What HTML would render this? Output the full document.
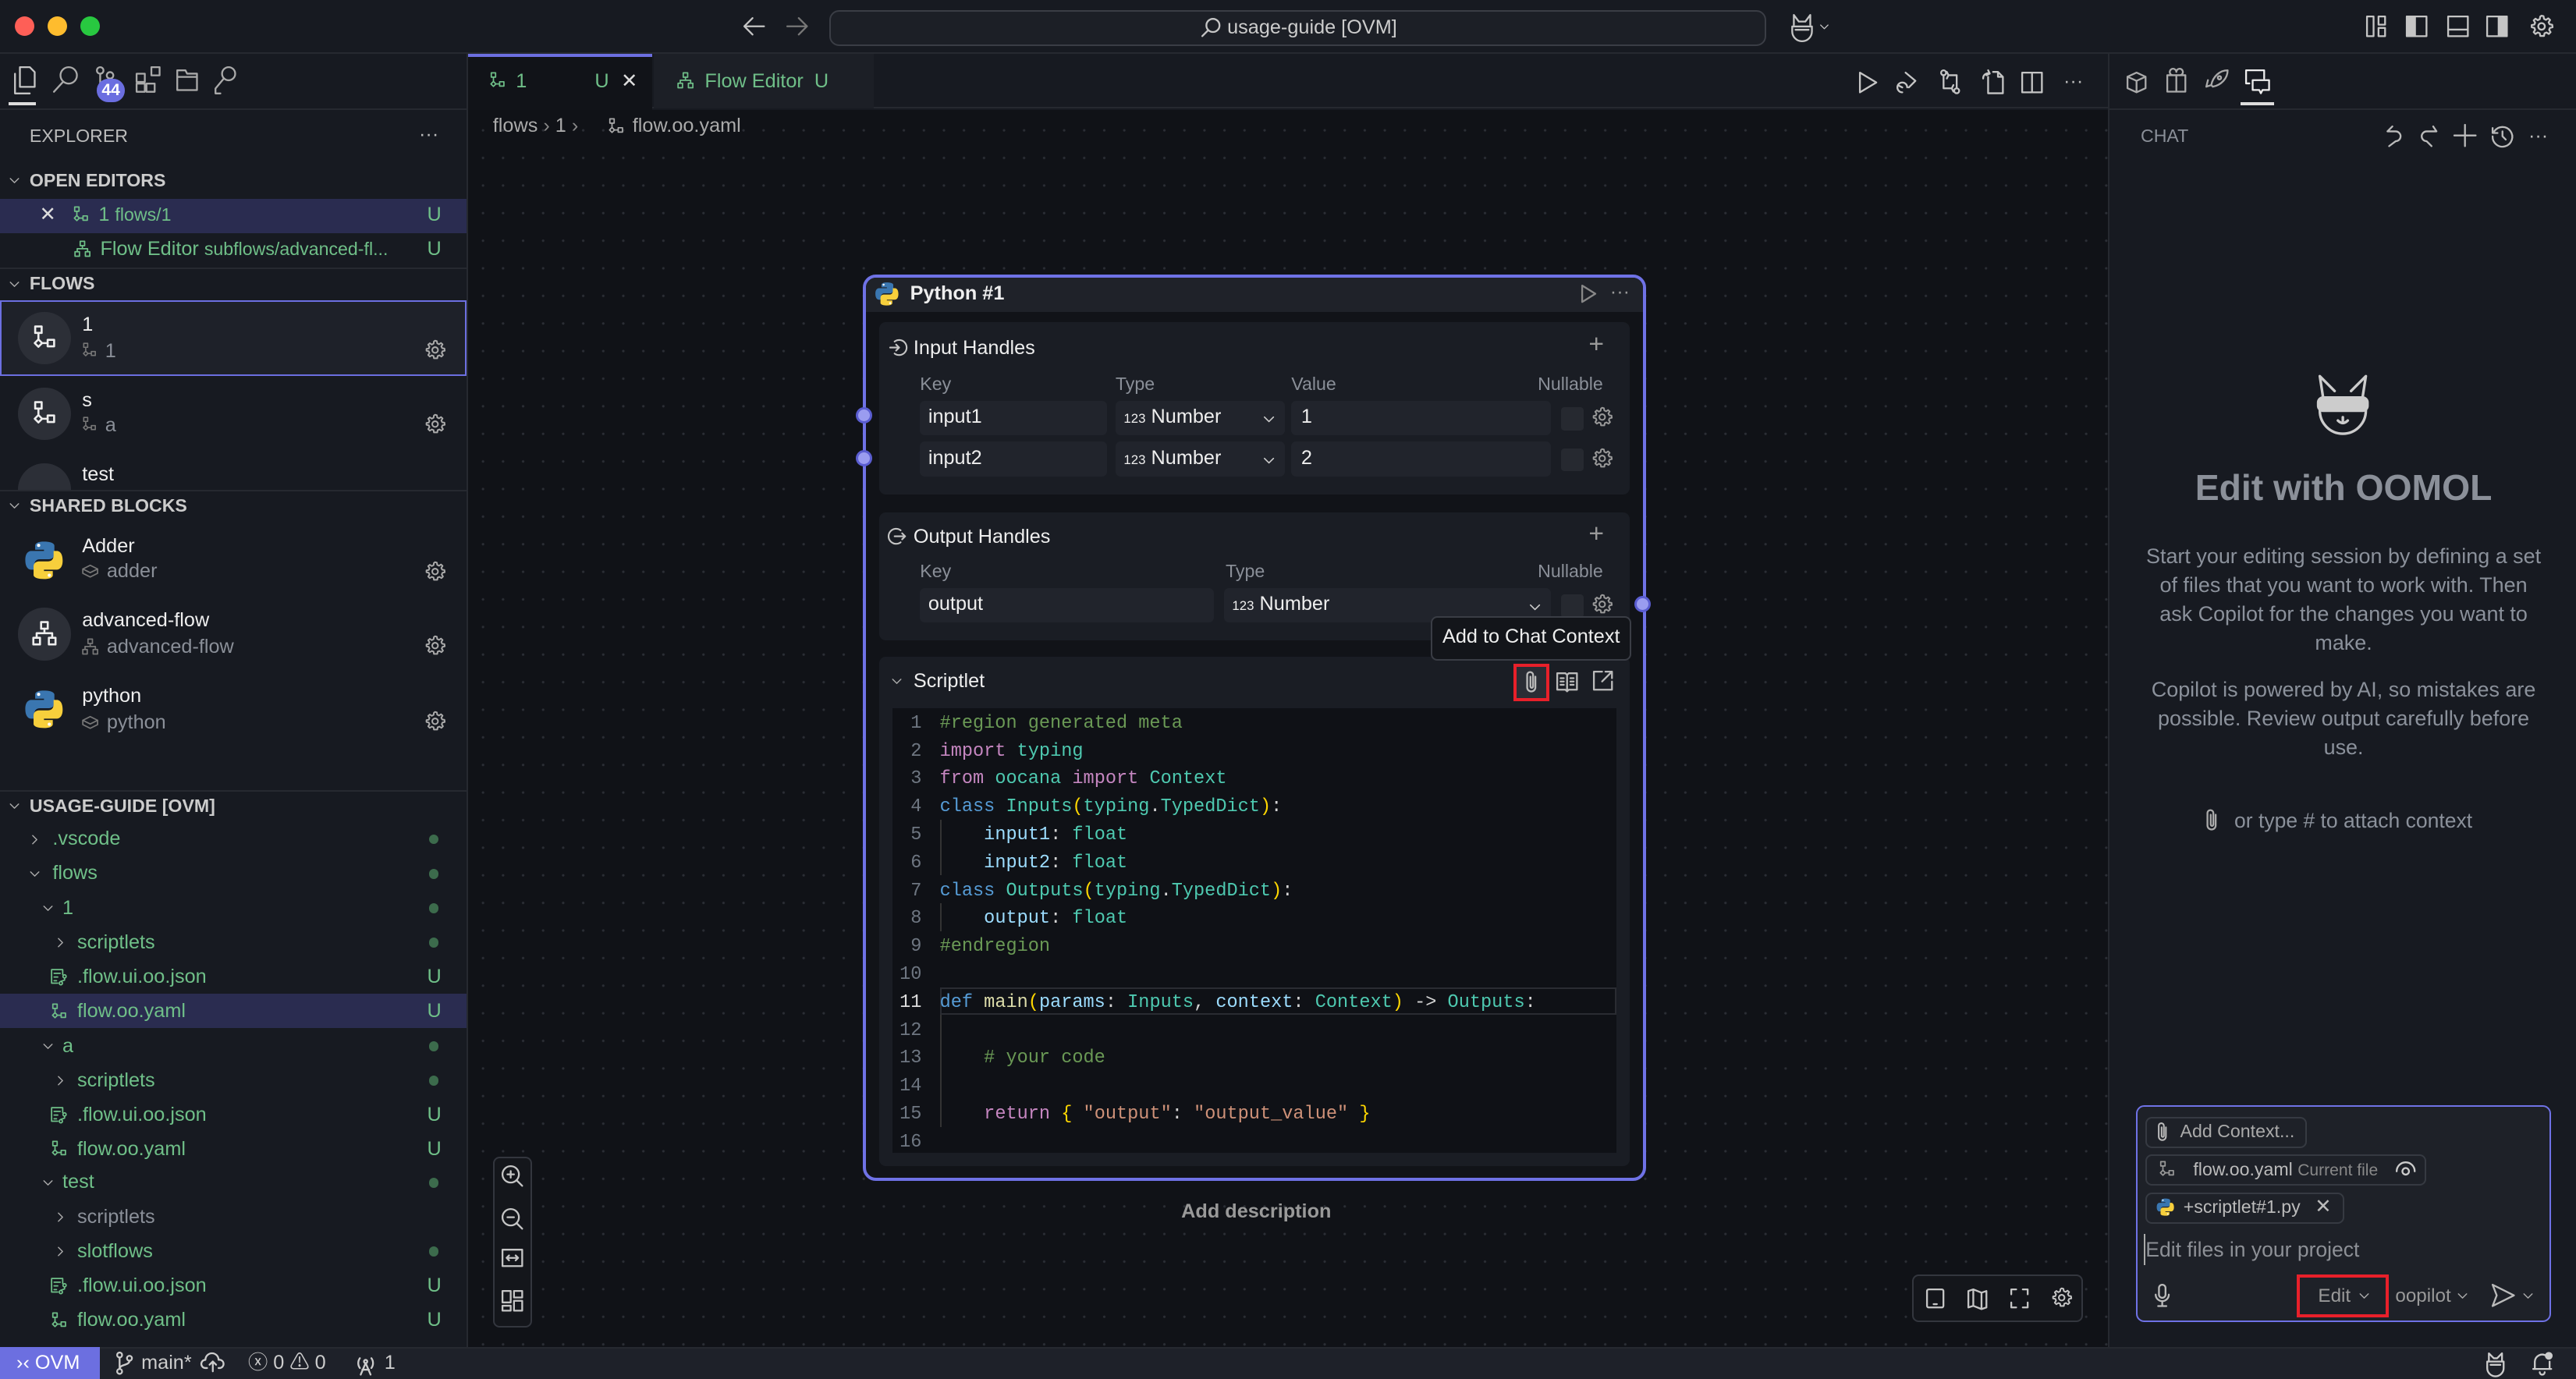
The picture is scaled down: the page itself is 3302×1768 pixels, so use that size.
<!DOCTYPE html>
<html><head><meta charset="utf-8">
<style>
*{box-sizing:border-box;margin:0;padding:0}
html,body{width:3302px;height:1768px;overflow:hidden;background:#16181e}
#r{zoom:2.1059;width:1568px;height:840px;position:relative;font-family:"Liberation Sans",sans-serif;font-size:12px;color:#cccccc;background:#171a21;overflow:hidden}
.a{position:absolute;white-space:nowrap;line-height:16px}
.g{color:#6fbf88}
.m{color:#8a8f98}
.b{font-weight:bold}
svg.i{position:absolute;overflow:visible;fill:none;stroke:#c5c5c5;stroke-width:1.1;stroke-linecap:round;stroke-linejoin:round}
.bx{position:absolute}
.mono{font-family:"Liberation Mono",monospace;font-size:11.2px;line-height:17px;white-space:pre}
</style></head><body><div id="r">
<svg width="0" height="0" style="position:absolute">
<defs>
<symbol id="gear" viewBox="0 0 16 16"><path d="M8 1.5l1.2.3.3 1.6 1.2.6 1.4-.9 1.1 1 -.9 1.4.6 1.2 1.6.3.2 1.5-1.6.4-.5 1.2.9 1.4-1.1 1.1-1.4-.9-1.2.5-.3 1.6H7.2l-.3-1.6-1.2-.5-1.4.9-1.1-1.1.9-1.4-.5-1.2-1.6-.4V7.2l1.6-.3.5-1.2-.9-1.4 1.1-1 1.4.9 1.2-.6.3-1.6z" fill="none"/><circle cx="8" cy="8" r="2"/></symbol>
<symbol id="flow" viewBox="0 0 16 16"><rect x="3" y="1.5" width="3.5" height="3.5"/><path d="M4.75 5v3.5"/><path d="M4.75 8.5l2 2-2 2-2-2z"/><path d="M6.75 10.5h3"/><rect x="9.75" y="8.75" width="3.5" height="3.5"/></symbol>
<symbol id="tree" viewBox="0 0 16 16"><rect x="6.2" y="1.5" width="3.6" height="3.6"/><path d="M8 5.1v2.4M3.8 10V7.5h8.4V10"/><rect x="2" y="10" width="3.6" height="3.6"/><rect x="10.4" y="10" width="3.6" height="3.6"/></symbol>
<symbol id="py" viewBox="0 0 16 16"><path d="M7.9 1C4.5 1 4.7 2.5 4.7 2.5V4h3.3v.5H3.4S1 4.2 1 7.9s2.1 3.6 2.1 3.6h1.3V9.7s-.1-2.1 2.1-2.1h3.4s2 0 2-2V2.6S12.2 1 7.9 1z" fill="#3a76b0" stroke="none"/><circle cx="6" cy="2.4" r=".6" fill="#fff" stroke="none"/><path d="M8.1 15c3.4 0 3.2-1.5 3.2-1.5V12H8v-.5h4.6S15 11.8 15 8.1s-2.1-3.6-2.1-3.6h-1.3v1.8s.1 2.1-2.1 2.1H6.1s-2 0-2 2v3S3.8 15 8.1 15z" fill="#f7cf3c" stroke="none"/><circle cx="10" cy="13.6" r=".6" fill="#fff" stroke="none"/></symbol>
<symbol id="cube" viewBox="0 0 16 16"><path d="M8 3l6 3-6 3-6-3z"/><path d="M2 6v3.5l6 3 6-3V6"/></symbol>
<symbol id="clip" viewBox="0 0 16 16"><path d="M10.5 5v6.5a2.5 2.5 0 0 1-5 0V4a1.8 1.8 0 0 1 3.6 0v7a.8.8 0 0 1-1.6 0V5"/></symbol>
<symbol id="chev" viewBox="0 0 16 16"><path d="M4 6l4 4 4-4"/></symbol>
<symbol id="chevr" viewBox="0 0 16 16"><path d="M6 4l4 4-4 4"/></symbol>
<symbol id="json" viewBox="0 0 16 16"><path d="M2 2h9v4M2 2v11h5M4 5h5M4 8h3M4 11h2"/><circle cx="12.5" cy="7.5" r="1.3"/><circle cx="9.5" cy="13" r="1.3"/><path d="M12.5 9v1.5l-3 1"/></symbol>
</defs></svg>

<!-- titlebar -->
<div class="bx" style="left:0;top:0;width:1568px;height:33px;background:#171a21;border-bottom:1px solid #262930"></div>
<div class="bx" style="left:9px;top:10px;width:12px;height:12px;border-radius:50%;background:#fe5f57"></div>
<div class="bx" style="left:29px;top:10px;width:12px;height:12px;border-radius:50%;background:#febc2e"></div>
<div class="bx" style="left:49px;top:10px;width:12px;height:12px;border-radius:50%;background:#28c840"></div>
<svg class="i" style="left:452px;top:9px" width="14" height="14" viewBox="0 0 14 14"><path d="M13 7H1M6 2L1 7l5 5"/></svg>
<svg class="i" style="left:478px;top:9px;stroke:#777" width="14" height="14" viewBox="0 0 14 14"><path d="M1 7h12M8 2l5 5-5 5"/></svg>
<div class="bx" style="left:505px;top:6px;width:570px;height:22px;border:1px solid #3a3d45;border-radius:6px;background:#1c1f26"></div>
<svg class="i" style="left:731px;top:10px" width="13" height="13" viewBox="0 0 13 13"><circle cx="7.5" cy="5.5" r="4"/><path d="M4.5 8.5L1 12"/></svg>
<div class="a" style="left:747px;top:9px;color:#ccc">usage-guide [OVM]</div>
<svg class="i" style="left:1088px;top:7px" width="18" height="18" viewBox="0 0 18 18"><path d="M4 8V2l3 4h4l3-4v6M3 9h12v3a5 5 0 0 1-12 0z M5 11h8"/></svg>
<svg class="i" style="left:1106px;top:12px" width="9" height="9"><use href="#chev"/></svg>
<svg class="i" style="left:1440px;top:9px" width="14" height="14" viewBox="0 0 14 14"><rect x="1" y="1" width="4" height="12"/><rect x="8" y="1" width="4" height="5"/><rect x="8" y="8" width="4" height="5"/></svg>
<svg class="i" style="left:1464px;top:9px" width="14" height="14" viewBox="0 0 14 14"><rect x="1" y="1" width="12" height="12"/><rect x="1" y="1" width="5" height="12" fill="#c5c5c5"/></svg>
<svg class="i" style="left:1489px;top:9px" width="14" height="14" viewBox="0 0 14 14"><rect x="1" y="1" width="12" height="12"/><path d="M1 9h12"/></svg>
<svg class="i" style="left:1513px;top:9px" width="14" height="14" viewBox="0 0 14 14"><rect x="1" y="1" width="12" height="12"/><rect x="8" y="1" width="5" height="12" fill="#c5c5c5"/></svg>
<svg class="i" style="left:1539px;top:8px" width="16" height="16"><use href="#gear"/></svg>

<!-- sidebar -->
<div class="bx" style="left:0;top:33px;width:285px;height:787px;background:#171a21;border-right:1px solid #262930"></div>
<div class="bx" style="left:0;top:66px;width:284px;height:1px;background:#262930"></div>
<svg class="i" style="left:7px;top:40px" width="16" height="18" viewBox="0 0 16 18"><path d="M5 1h6l3 3v9H5zM2 5v12h9"/></svg>
<div class="bx" style="left:5px;top:62px;width:17px;height:2px;background:#ddd"></div>
<svg class="i" style="left:32px;top:40px;stroke:#aaa" width="16" height="18" viewBox="0 0 16 18"><circle cx="10" cy="6" r="5"/><path d="M6.5 10L1 16"/></svg>
<svg class="i" style="left:57px;top:40px;stroke:#aaa" width="14" height="18" viewBox="0 0 14 18"><circle cx="4" cy="3" r="2"/><path d="M4 5v9"/><circle cx="10" cy="6" r="2"/></svg>
<div class="bx" style="left:59px;top:48px;width:17px;height:14px;border-radius:7px;background:#6b6ee0;color:#fff;font-size:10px;line-height:14px;text-align:center;font-weight:bold">44</div>
<svg class="i" style="left:82px;top:40px;stroke:#aaa" width="18" height="18" viewBox="0 0 18 18"><rect x="1" y="5" width="5" height="5"/><rect x="1" y="11" width="5" height="5"/><rect x="7" y="11" width="5" height="5"/><rect x="10" y="1" width="5" height="5"/></svg>
<svg class="i" style="left:106px;top:41px;stroke:#aaa" width="16" height="16" viewBox="0 0 16 16"><path d="M2 2h5l1 2h6v10H2zM2 6h12"/></svg>
<svg class="i" style="left:129px;top:40px;stroke:#aaa" width="16" height="18" viewBox="0 0 16 18"><circle cx="10" cy="5" r="4"/><path d="M7 8L2 14v3h3"/></svg>

<div class="a m" style="left:18px;top:75px;font-size:11px;color:#bbb">EXPLORER</div>
<div class="a" style="left:255px;top:74px;color:#bbb">···</div>
<svg class="i" style="left:4px;top:105px;stroke:#aaa" width="10" height="10"><use href="#chev"/></svg>
<div class="a b" style="left:18px;top:102px;font-size:11px;color:#ccc">OPEN EDITORS</div>
<div class="bx" style="left:0;top:121px;width:284px;height:21px;background:#2a2c50"></div>
<div class="a" style="left:24px;top:123px;color:#ddd">✕</div>
<svg class="i" style="left:43px;top:125px;stroke:#6fbf88" width="12" height="12"><use href="#flow"/></svg>
<div class="a g" style="left:60px;top:123px">1 <span style="font-size:11px">flows/1</span></div>
<div class="a g" style="left:260px;top:123px">U</div>
<svg class="i" style="left:44px;top:146px;stroke:#6fbf88" width="12" height="12"><use href="#tree"/></svg>
<div class="a g" style="left:61px;top:144px">Flow Editor <span style="font-size:11px">subflows/advanced-fl...</span></div>
<div class="a g" style="left:260px;top:144px">U</div>
<div class="bx" style="left:0;top:163px;width:284px;height:1px;background:#262930"></div>
<svg class="i" style="left:4px;top:168px;stroke:#aaa" width="10" height="10"><use href="#chev"/></svg>
<div class="a b" style="left:18px;top:165px;font-size:11px">FLOWS</div>
<div class="bx" style="left:0;top:183px;width:284px;height:46px;background:#1e2129;border:1px solid #6c6fe0"></div>
<div class="bx" style="left:11px;top:190px;width:32px;height:32px;border-radius:50%;background:#2c2f37"></div>
<svg class="i" style="left:18px;top:197px;stroke:#eee" width="18" height="18"><use href="#flow"/></svg>
<div class="a" style="left:50px;top:190px;color:#eee">1</div>
<svg class="i" style="left:49px;top:208px;stroke:#777" width="11" height="11"><use href="#flow"/></svg>
<div class="a m" style="left:64px;top:206px">1</div>
<svg class="i" style="left:258px;top:206px;stroke:#aaa" width="14" height="14"><use href="#gear"/></svg>
<div class="bx" style="left:11px;top:236px;width:32px;height:32px;border-radius:50%;background:#2c2f37"></div>
<svg class="i" style="left:18px;top:243px;stroke:#eee" width="18" height="18"><use href="#flow"/></svg>
<div class="a" style="left:50px;top:236px;color:#eee">s</div>
<svg class="i" style="left:49px;top:253px;stroke:#777" width="11" height="11"><use href="#flow"/></svg>
<div class="a m" style="left:64px;top:251px">a</div>
<svg class="i" style="left:258px;top:251px;stroke:#aaa" width="14" height="14"><use href="#gear"/></svg>
<div class="bx" style="left:11px;top:282px;width:32px;height:16px;border-radius:16px 16px 0 0;background:#2c2f37"></div>
<div class="a" style="left:50px;top:281px;color:#eee">test</div>
<div class="bx" style="left:0;top:298px;width:284px;height:1px;background:#262930"></div>
<svg class="i" style="left:4px;top:303px;stroke:#aaa" width="10" height="10"><use href="#chev"/></svg>
<div class="a b" style="left:18px;top:300px;font-size:11px">SHARED BLOCKS</div>
<svg class="i" style="left:14px;top:328px" width="26" height="26"><use href="#py"/></svg>
<div class="a" style="left:50px;top:325px;color:#eee">Adder</div>
<svg class="i" style="left:49px;top:342px;stroke:#777" width="12" height="12"><use href="#cube"/></svg>
<div class="a m" style="left:65px;top:340px">adder</div>
<svg class="i" style="left:258px;top:341px;stroke:#aaa" width="14" height="14"><use href="#gear"/></svg>
<div class="bx" style="left:11px;top:370px;width:32px;height:32px;border-radius:50%;background:#2c2f37"></div>
<svg class="i" style="left:18px;top:377px;stroke:#eee" width="18" height="18"><use href="#tree"/></svg>
<div class="a" style="left:50px;top:370px;color:#eee">advanced-flow</div>
<svg class="i" style="left:49px;top:388px;stroke:#777" width="12" height="12"><use href="#tree"/></svg>
<div class="a m" style="left:65px;top:386px">advanced-flow</div>
<svg class="i" style="left:258px;top:386px;stroke:#aaa" width="14" height="14"><use href="#gear"/></svg>
<svg class="i" style="left:14px;top:419px" width="26" height="26"><use href="#py"/></svg>
<div class="a" style="left:50px;top:416px;color:#eee">python</div>
<svg class="i" style="left:49px;top:434px;stroke:#777" width="12" height="12"><use href="#cube"/></svg>
<div class="a m" style="left:65px;top:432px">python</div>
<svg class="i" style="left:258px;top:432px;stroke:#aaa" width="14" height="14"><use href="#gear"/></svg>
<div class="bx" style="left:0;top:481px;width:284px;height:1px;background:#262930"></div>
<svg class="i" style="left:4px;top:486px;stroke:#aaa" width="10" height="10"><use href="#chev"/></svg>
<div class="a b" style="left:18px;top:483px;font-size:11px">USAGE-GUIDE [OVM]</div>

<div class="bx" style="left:0;top:605px;width:284px;height:21px;background:#2a2c50"></div>
<!-- tree -->
<svg class="i" style="left:16px;top:506px;stroke:#aaa" width="10" height="10"><use href="#chevr"/></svg><div class="a g" style="left:32px;top:503px">.vscode</div>
<svg class="i" style="left:16px;top:527px;stroke:#aaa" width="10" height="10"><use href="#chev"/></svg><div class="a g" style="left:32px;top:524px">flows</div>
<svg class="i" style="left:24px;top:548px;stroke:#aaa" width="10" height="10"><use href="#chev"/></svg><div class="a g" style="left:38px;top:545px">1</div>
<svg class="i" style="left:32px;top:569px;stroke:#aaa" width="10" height="10"><use href="#chevr"/></svg><div class="a g" style="left:47px;top:566px">scriptlets</div>
<svg class="i" style="left:30px;top:589px;stroke:#6fbf88" width="12" height="12"><use href="#json"/></svg><div class="a g" style="left:47px;top:587px">.flow.ui.oo.json</div>
<svg class="i" style="left:30px;top:610px;stroke:#6fbf88" width="12" height="12"><use href="#flow"/></svg><div class="a g" style="left:47px;top:608px">flow.oo.yaml</div>
<svg class="i" style="left:24px;top:632px;stroke:#aaa" width="10" height="10"><use href="#chev"/></svg><div class="a g" style="left:38px;top:629px">a</div>
<svg class="i" style="left:32px;top:653px;stroke:#aaa" width="10" height="10"><use href="#chevr"/></svg><div class="a g" style="left:47px;top:650px">scriptlets</div>
<svg class="i" style="left:30px;top:673px;stroke:#6fbf88" width="12" height="12"><use href="#json"/></svg><div class="a g" style="left:47px;top:671px">.flow.ui.oo.json</div>
<svg class="i" style="left:30px;top:694px;stroke:#6fbf88" width="12" height="12"><use href="#flow"/></svg><div class="a g" style="left:47px;top:692px">flow.oo.yaml</div>
<svg class="i" style="left:24px;top:715px;stroke:#aaa" width="10" height="10"><use href="#chev"/></svg><div class="a g" style="left:38px;top:712px">test</div>
<svg class="i" style="left:32px;top:736px;stroke:#aaa" width="10" height="10"><use href="#chevr"/></svg><div class="a m" style="left:47px;top:733px">scriptlets</div>
<svg class="i" style="left:32px;top:757px;stroke:#aaa" width="10" height="10"><use href="#chevr"/></svg><div class="a g" style="left:47px;top:754px">slotflows</div>
<svg class="i" style="left:30px;top:777px;stroke:#6fbf88" width="12" height="12"><use href="#json"/></svg><div class="a g" style="left:47px;top:775px">.flow.ui.oo.json</div>
<svg class="i" style="left:30px;top:798px;stroke:#6fbf88" width="12" height="12"><use href="#flow"/></svg><div class="a g" style="left:47px;top:796px">flow.oo.yaml</div>
<!-- status markers -->
<div class="bx" style="left:261px;top:508px;width:6px;height:6px;border-radius:50%;background:#3c6b4c"></div>
<div class="bx" style="left:261px;top:529px;width:6px;height:6px;border-radius:50%;background:#3c6b4c"></div>
<div class="bx" style="left:261px;top:550px;width:6px;height:6px;border-radius:50%;background:#3c6b4c"></div>
<div class="bx" style="left:261px;top:571px;width:6px;height:6px;border-radius:50%;background:#3c6b4c"></div>
<div class="a g" style="left:260px;top:587px">U</div>
<div class="a g" style="left:260px;top:608px">U</div>
<div class="bx" style="left:261px;top:634px;width:6px;height:6px;border-radius:50%;background:#3c6b4c"></div>
<div class="bx" style="left:261px;top:655px;width:6px;height:6px;border-radius:50%;background:#3c6b4c"></div>
<div class="a g" style="left:260px;top:671px">U</div>
<div class="a g" style="left:260px;top:692px">U</div>
<div class="bx" style="left:261px;top:717px;width:6px;height:6px;border-radius:50%;background:#3c6b4c"></div>
<div class="bx" style="left:261px;top:759px;width:6px;height:6px;border-radius:50%;background:#3c6b4c"></div>
<div class="a g" style="left:260px;top:775px">U</div>
<div class="a g" style="left:260px;top:796px">U</div>

<!-- editor -->
<div class="bx" style="left:285px;top:33px;width:999px;height:33px;background:#171a21;border-bottom:1px solid #262930"></div>
<div class="bx" style="left:285px;top:33px;width:112px;height:34px;background:#111318;border-top:2px solid #6c6fe0"></div>
<svg class="i" style="left:297px;top:43px;stroke:#6fbf88" width="12" height="12"><use href="#flow"/></svg>
<div class="a g" style="left:314px;top:42px">1</div>
<div class="a g" style="left:362px;top:42px">U</div>
<div class="a" style="left:378px;top:42px;color:#ddd">✕</div>
<div class="bx" style="left:398px;top:33px;width:134px;height:33px;background:#1c1f26"></div>
<svg class="i" style="left:411px;top:43px;stroke:#6fbf88" width="12" height="12"><use href="#tree"/></svg>
<div class="a g" style="left:429px;top:42px">Flow Editor&nbsp; U</div>
<svg class="i" style="left:1131px;top:43px" width="12" height="14" viewBox="0 0 12 14"><path d="M1 1l10 6-10 6z"/></svg>
<svg class="i" style="left:1154px;top:43px" width="14" height="14" viewBox="0 0 14 14"><path d="M6 1l6 5-4 4M4 13a3 3 0 1 1 3-3M2 9l2 1"/></svg>
<svg class="i" style="left:1180px;top:42px" width="14" height="16" viewBox="0 0 14 16"><circle cx="3" cy="2.5" r="1.5"/><circle cx="11" cy="13.5" r="1.5"/><path d="M3 4v8h5M9 10l-1 2 1 2M11 12V4H6M5 2l1 2-1 2"/></svg>
<svg class="i" style="left:1206px;top:42px" width="14" height="16" viewBox="0 0 14 16"><path d="M4 5V15h9V5l-3-3H7M10 2v3h3M1 6a3 3 0 0 1 4-3M4 1l1 2-2 1"/></svg>
<svg class="i" style="left:1230px;top:43px" width="14" height="14" viewBox="0 0 14 14"><rect x="1" y="1" width="12" height="12"/><path d="M7 1v12"/></svg>
<div class="a" style="left:1256px;top:42px;color:#bbb">···</div>

<div class="bx" style="left:285px;top:67px;width:999px;height:753px;background-color:#101217;background-image:radial-gradient(circle,#2b2e35 0.6px,transparent 0.9px);background-size:12.2px 16.8px;background-position:3px 4px"></div>
<div class="a" style="left:300px;top:69px;color:#aaa">flows <span style="color:#888">›</span> 1 <span style="color:#888">›</span></div>
<svg class="i" style="left:369px;top:71px;stroke:#aaa" width="12" height="12"><use href="#flow"/></svg>
<div class="a" style="left:385px;top:69px;color:#aaa">flow.oo.yaml</div>
<div class="bx" style="left:1283px;top:33px;width:1px;height:787px;background:#262930"></div>

<!-- node -->
<div class="bx" style="left:525px;top:167px;width:477px;height:552px;border:2px solid #6f72e6;border-radius:8px;background:#111318"></div>
<div class="bx" style="left:527px;top:169px;width:473px;height:21px;background:#1f2229;border-radius:6px 6px 0 0"></div>
<svg class="i" style="left:532px;top:171px" width="16" height="16"><use href="#py"/></svg>
<div class="a b" style="left:554px;top:171px;color:#eee">Python #1</div>
<svg class="i" style="left:962px;top:173px;stroke:#888" width="10" height="12" viewBox="0 0 10 12"><path d="M1 1l8 5-8 5z"/></svg>
<div class="a" style="left:980px;top:170px;color:#999">···</div>

<div class="bx" style="left:535px;top:196px;width:457px;height:105px;background:#1a1d24;border-radius:4px"></div>
<svg class="i" style="left:541px;top:206px" width="11" height="11" viewBox="0 0 12 12"><path d="M4 2a5 5 0 1 1 0 8M1 6h6M5 4l2 2-2 2"/></svg>
<div class="a" style="left:556px;top:204px;color:#eee">Input Handles</div>
<div class="a" style="left:967px;top:202px;color:#999;font-size:16px">+</div>
<div class="a m" style="left:560px;top:226px;font-size:11px">Key</div>
<div class="a m" style="left:679px;top:226px;font-size:11px">Type</div>
<div class="a m" style="left:786px;top:226px;font-size:11px">Value</div>
<div class="a m" style="left:936px;top:226px;font-size:11px">Nullable</div>
<div class="bx" style="left:560px;top:244px;width:114px;height:21px;background:#21242c;border-radius:3px"></div>
<div class="bx" style="left:679px;top:244px;width:103px;height:21px;background:#21242c;border-radius:3px"></div>
<div class="bx" style="left:786px;top:244px;width:158px;height:21px;background:#21242c;border-radius:3px"></div>
<div class="bx" style="left:950px;top:248px;width:14px;height:14px;background:#262930;border-radius:2px"></div>
<div class="bx" style="left:560px;top:269px;width:114px;height:21px;background:#21242c;border-radius:3px"></div>
<div class="bx" style="left:679px;top:269px;width:103px;height:21px;background:#21242c;border-radius:3px"></div>
<div class="bx" style="left:786px;top:269px;width:158px;height:21px;background:#21242c;border-radius:3px"></div>
<div class="bx" style="left:950px;top:273px;width:14px;height:14px;background:#262930;border-radius:2px"></div>
<div class="a" style="left:565px;top:246px;color:#eee">input1</div>
<div class="a" style="left:684px;top:246px;color:#eee"><span style="font-size:8px">123</span> Number</div>
<svg class="i" style="left:767px;top:250px;stroke:#ccc" width="11" height="11"><use href="#chev"/></svg>
<div class="a" style="left:792px;top:246px;color:#eee">1</div>
<svg class="i" style="left:968px;top:247px;stroke:#999" width="14" height="14"><use href="#gear"/></svg>
<div class="a" style="left:565px;top:271px;color:#eee">input2</div>
<div class="a" style="left:684px;top:271px;color:#eee"><span style="font-size:8px">123</span> Number</div>
<svg class="i" style="left:767px;top:275px;stroke:#ccc" width="11" height="11"><use href="#chev"/></svg>
<div class="a" style="left:792px;top:271px;color:#eee">2</div>
<svg class="i" style="left:968px;top:272px;stroke:#999" width="14" height="14"><use href="#gear"/></svg>

<div class="bx" style="left:535px;top:312px;width:457px;height:78px;background:#1a1d24;border-radius:4px"></div>
<svg class="i" style="left:541px;top:321px" width="11" height="11" viewBox="0 0 12 12"><path d="M8 2a5 5 0 1 0 0 8M4 6h7M9 4l2 2-2 2"/></svg>
<div class="a" style="left:556px;top:319px;color:#eee">Output Handles</div>
<div class="a" style="left:967px;top:317px;color:#999;font-size:16px">+</div>
<div class="a m" style="left:560px;top:340px;font-size:11px">Key</div>
<div class="a m" style="left:746px;top:340px;font-size:11px">Type</div>
<div class="a m" style="left:936px;top:340px;font-size:11px">Nullable</div>
<div class="bx" style="left:560px;top:358px;width:179px;height:21px;background:#21242c;border-radius:3px"></div>
<div class="bx" style="left:745px;top:358px;width:199px;height:21px;background:#21242c;border-radius:3px"></div>
<div class="bx" style="left:950px;top:362px;width:14px;height:14px;background:#262930;border-radius:2px"></div>
<div class="a" style="left:565px;top:360px;color:#eee">output</div>
<div class="a" style="left:750px;top:360px;color:#eee"><span style="font-size:8px">123</span> Number</div>
<svg class="i" style="left:929px;top:364px;stroke:#ccc" width="11" height="11"><use href="#chev"/></svg>
<svg class="i" style="left:968px;top:361px;stroke:#999" width="14" height="14"><use href="#gear"/></svg>

<div class="bx" style="left:521px;top:248px;width:10px;height:10px;border-radius:50%;background:#9a9cf0;border:1.5px solid #5a5dd0"></div>
<div class="bx" style="left:521px;top:274px;width:10px;height:10px;border-radius:50%;background:#9a9cf0;border:1.5px solid #5a5dd0"></div>
<div class="bx" style="left:995px;top:363px;width:10px;height:10px;border-radius:50%;background:#9a9cf0;border:1.5px solid #5a5dd0"></div>

<div class="bx" style="left:535px;top:400px;width:457px;height:310px;background:#1a1d24;border-radius:4px"></div>
<svg class="i" style="left:541px;top:410px;stroke:#aaa" width="10" height="10"><use href="#chev"/></svg>
<div class="a" style="left:556px;top:407px;color:#eee">Scriptlet</div>
<div class="bx" style="left:921px;top:404px;width:22px;height:23px;background:#2a2d35;border:2px solid #e8202a"></div>
<svg class="i" style="left:924px;top:407px;stroke:#bbb" width="16" height="16"><use href="#clip"/></svg>
<svg class="i" style="left:947px;top:408px;stroke:#bbb" width="14" height="14" viewBox="0 0 14 14"><path d="M1 2h5l1 1 1-1h5v10H8l-1 1-1-1H1zM7 3v10M3 5h2M3 7h2M3 9h2M9 5h2M9 7h2M9 9h2"/></svg>
<svg class="i" style="left:969px;top:408px;stroke:#bbb" width="13" height="13" viewBox="0 0 13 13"><path d="M6 1H1v11h11V7M8 1h4v4M12 1L6 7"/></svg>
<div class="bx" style="left:871px;top:375px;width:122px;height:27px;background:#13151a;border:1px solid #3a3d45;border-radius:4px"></div>
<div class="a" style="left:878px;top:380px;color:#eee">Add to Chat Context</div>

<div class="bx" style="left:543px;top:431px;width:441px;height:271px;background:#0f1116"></div>
<div class="bx" style="left:572px;top:601px;width:412px;height:17px;border:1px solid #2a2c32"></div>
<div class="bx" style="left:572px;top:499px;width:1px;height:34px;background:#333"></div>
<div class="bx" style="left:572px;top:550px;width:1px;height:17px;background:#333"></div>
<div class="bx" style="left:572px;top:618px;width:1px;height:68px;background:#333"></div>
<div class="a mono" style="left:543px;top:432px;width:18px;text-align:right;color:#6e7681">1
2
3
4
5
6
7
8
9
10
<span style="color:#ddd">11</span>
12
13
14
15
16</div>
<div class="a mono" style="left:572px;top:432px;color:#d4d4d4"><span style="color:#6a9955">#region generated meta</span>
<span style="color:#c586c0">import</span> <span style="color:#4ec9b0">typing</span>
<span style="color:#c586c0">from</span> <span style="color:#4ec9b0">oocana</span> <span style="color:#c586c0">import</span> <span style="color:#4ec9b0">Context</span>
<span style="color:#569cd6">class</span> <span style="color:#4ec9b0">Inputs</span><span style="color:#ffd700">(</span><span style="color:#4ec9b0">typing</span>.<span style="color:#4ec9b0">TypedDict</span><span style="color:#ffd700">)</span>:
    <span style="color:#9cdcfe">input1</span>: <span style="color:#4ec9b0">float</span>
    <span style="color:#9cdcfe">input2</span>: <span style="color:#4ec9b0">float</span>
<span style="color:#569cd6">class</span> <span style="color:#4ec9b0">Outputs</span><span style="color:#ffd700">(</span><span style="color:#4ec9b0">typing</span>.<span style="color:#4ec9b0">TypedDict</span><span style="color:#ffd700">)</span>:
    <span style="color:#9cdcfe">output</span>: <span style="color:#4ec9b0">float</span>
<span style="color:#6a9955">#endregion</span>

<span style="color:#569cd6">def</span> <span style="color:#dcdcaa">main</span><span style="color:#ffd700">(</span><span style="color:#9cdcfe">params</span>: <span style="color:#4ec9b0">Inputs</span>, <span style="color:#9cdcfe">context</span>: <span style="color:#4ec9b0">Context</span><span style="color:#ffd700">)</span> -&gt; <span style="color:#4ec9b0">Outputs</span>:

    <span style="color:#6a9955"># your code</span>

    <span style="color:#c586c0">return</span> <span style="color:#ffd700">{</span> <span style="color:#ce9178">"output"</span>: <span style="color:#ce9178">"output_value"</span> <span style="color:#ffd700">}</span>
</div>

<div class="a b" style="left:719px;top:730px;color:#999">Add description</div>

<div class="bx" style="left:300px;top:704px;width:24px;height:104px;border:1px solid #33363e;border-radius:4px;background:#14161b"></div>
<svg class="i" style="left:305px;top:709px" width="14" height="14" viewBox="0 0 14 14"><circle cx="6" cy="6" r="5"/><path d="M9.5 9.5L13 13M4 6h4M6 4v4"/></svg>
<svg class="i" style="left:305px;top:735px" width="14" height="14" viewBox="0 0 14 14"><circle cx="6" cy="6" r="5"/><path d="M9.5 9.5L13 13M4 6h4"/></svg>
<svg class="i" style="left:305px;top:759px" width="14" height="14" viewBox="0 0 14 14"><rect x="1" y="2" width="12" height="10"/><path d="M3.5 7h7M5 5.5L3.5 7 5 8.5M9 5.5L10.5 7 9 8.5"/></svg>
<svg class="i" style="left:305px;top:785px" width="14" height="14" viewBox="0 0 14 14"><rect x="1" y="1" width="5" height="7"/><rect x="8" y="1" width="5" height="4"/><rect x="8" y="7" width="5" height="6"/><rect x="1" y="10" width="5" height="3"/></svg>
<div class="bx" style="left:1164px;top:776px;width:104px;height:29px;border:1px solid #33363e;border-radius:4px;background:#14161b"></div>
<svg class="i" style="left:1172px;top:784px" width="12" height="13" viewBox="0 0 12 13"><rect x="1" y="1" width="10" height="11" rx="1"/><path d="M5 10h2"/></svg>
<svg class="i" style="left:1197px;top:784px" width="13" height="13" viewBox="0 0 13 13"><path d="M1 2l3-1 5 2 3-1v10l-3 1-5-2-3 1zM4 1v10M9 3v10"/></svg>
<svg class="i" style="left:1223px;top:784px" width="12" height="13" viewBox="0 0 12 13"><path d="M1 4V1h3M8 1h3v3M11 9v3H8M4 12H1V9"/></svg>
<svg class="i" style="left:1248px;top:783px" width="14" height="14"><use href="#gear"/></svg>

<!-- chat -->
<div class="bx" style="left:1284px;top:66px;width:284px;height:1px;background:#262930"></div>
<svg class="i" style="left:1294px;top:43px;stroke:#aaa" width="13" height="14" viewBox="0 0 13 14"><path d="M6.5 1L12 3.5v7L6.5 13 1 10.5v-7zM1 3.5L6.5 6 12 3.5M6.5 6v7"/></svg>
<svg class="i" style="left:1318px;top:42px;stroke:#aaa" width="13" height="15" viewBox="0 0 13 15"><rect x="1" y="4" width="11" height="10"/><path d="M6.5 4v10M4 4a2 2 0 1 1 2.5-2M9 4a2 2 0 1 0-2.5-2"/></svg>
<svg class="i" style="left:1342px;top:42px;stroke:#aaa" width="15" height="15" viewBox="0 0 15 15"><path d="M14 1C9 1 5 5 4 10l1 1c5-1 9-5 9-10zM4 10l-3 1 1-4M10 5.5a1 1 0 1 0 0 .1"/></svg>
<svg class="i" style="left:1366px;top:42px;stroke:#eee" width="16" height="16" viewBox="0 0 16 16"><path d="M1 1h11v5M1 1v8h2M5 7h10v6h-4l-1 2-1-2H5z"/></svg>
<div class="bx" style="left:1364px;top:62px;width:20px;height:2px;background:#ddd"></div>
<div class="a m" style="left:1303px;top:75px;font-size:11px">CHAT</div>
<svg class="i" style="left:1450px;top:76px;stroke:#bbb" width="12" height="14" viewBox="0 0 12 14"><path d="M3 4l3-3M3 4h5a3 3 0 0 1 0 6L4 13"/></svg>
<svg class="i" style="left:1472px;top:76px;stroke:#bbb" width="12" height="14" viewBox="0 0 12 14"><path d="M9 1l2 3H5a3 3 0 0 0 0 6l3 3"/></svg>
<svg class="i" style="left:1494px;top:76px;stroke:#bbb" width="13" height="13" viewBox="0 0 13 13"><path d="M6.5 0v13M0 6.5h13"/></svg>
<svg class="i" style="left:1516px;top:76px;stroke:#bbb" width="14" height="14" viewBox="0 0 14 14"><path d="M2 4a6 6 0 1 1-1 3M1 2v3h3M7 4v3l2 2"/></svg>
<div class="a" style="left:1539px;top:75px;color:#bbb">···</div>

<svg class="i" style="left:1406px;top:226px;stroke:#ccc;stroke-width:1.6" width="40" height="40" viewBox="0 0 40 40"><path d="M8 16L6 3l9 9M32 16l2-13-9 9"/><path d="M6 17h28v7a14 14 0 0 1-28 0z" fill="#171a21"/><rect x="5" y="16" width="30" height="8" rx="3" fill="#ccc"/><path d="M17 30q3 3 6 0M20 28v2"/></svg>
<div class="a b" style="left:1285px;top:284px;width:283px;text-align:center;font-size:22px;line-height:26px;color:#8b9099">Edit with OOMOL</div>
<div class="a" style="left:1285px;top:330px;width:283px;text-align:center;font-size:12.8px;line-height:17.6px;color:#8b919b">Start your editing session by defining a set<br>of files that you want to work with. Then<br>ask Copilot for the changes you want to<br>make.</div>
<div class="a" style="left:1285px;top:411px;width:283px;text-align:center;font-size:12.8px;line-height:17.6px;color:#8b919b">Copilot is powered by AI, so mistakes are<br>possible. Review output carefully before<br>use.</div>
<svg class="i" style="left:1338px;top:491px;stroke:#aaa" width="16" height="16"><use href="#clip"/></svg>
<div class="a" style="left:1360px;top:492px;font-size:12.6px;color:#8b919b">or type # to attach context</div>

<div class="bx" style="left:1300px;top:673px;width:253px;height:132px;border:1px solid #6f72e6;border-radius:5px;background:#1e2128"></div>
<div class="bx" style="left:1306px;top:680px;width:98px;height:19px;border:1px solid #363a42;border-radius:4px"></div>
<svg class="i" style="left:1309px;top:682px;stroke:#bbb" width="14" height="14"><use href="#clip"/></svg>
<div class="a" style="left:1327px;top:681px;font-size:11px;color:#aaa">Add Context...</div>
<div class="bx" style="left:1306px;top:703px;width:171px;height:19px;border:1px solid #363a42;border-radius:4px"></div>
<svg class="i" style="left:1313px;top:706px;stroke:#999" width="12" height="12"><use href="#flow"/></svg>
<div class="a" style="left:1335px;top:704px;font-size:11px;color:#bbb">flow.oo.yaml <span style="color:#888;font-size:10px">Current file</span></div>
<svg class="i" style="left:1458px;top:706px;stroke:#ccc" width="13" height="12" viewBox="0 0 13 12"><path d="M1 7a5.5 5.5 0 0 1 11 0"/><circle cx="6.5" cy="7" r="2"/></svg>
<div class="bx" style="left:1306px;top:726px;width:121px;height:19px;border:1px solid #363a42;border-radius:4px"></div>
<svg class="i" style="left:1312px;top:729px" width="12" height="12"><use href="#py"/></svg>
<div class="a" style="left:1329px;top:727px;font-size:11px;color:#bbb">+scriptlet#1.py</div>
<div class="a" style="left:1409px;top:727px;color:#bbb">✕</div>
<div class="bx" style="left:1305px;top:751px;width:1px;height:19px;background:#aaa"></div>
<div class="a" style="left:1306px;top:753px;font-size:12.6px;color:#8d9096">Edit files in your project</div>
<svg class="i" style="left:1310px;top:781px;stroke:#bbb" width="12" height="15" viewBox="0 0 12 15"><rect x="4" y="1" width="4" height="8" rx="2"/><path d="M2 7a4 4 0 0 0 8 0M6 11v3M3.5 14h5"/></svg>
<div class="bx" style="left:1398px;top:776px;width:56px;height:26px;border:2px solid #e8202a"></div>
<div class="a" style="left:1411px;top:781px;font-size:11.5px;color:#999">Edit</div>
<svg class="i" style="left:1434px;top:784px;stroke:#aaa" width="10" height="10"><use href="#chev"/></svg>
<div class="a" style="left:1458px;top:781px;font-size:11.5px;color:#999">oopilot</div>
<svg class="i" style="left:1494px;top:784px;stroke:#aaa" width="10" height="10"><use href="#chev"/></svg>
<svg class="i" style="left:1516px;top:781px;stroke:#bbb" width="15" height="15" viewBox="0 0 15 15"><path d="M1 1l13 6.5L1 14l2.5-6.5z"/></svg>
<svg class="i" style="left:1534px;top:784px;stroke:#aaa" width="10" height="10"><use href="#chev"/></svg>

<!-- status bar -->
<div class="bx" style="left:0;top:820px;width:1568px;height:20px;background:#1e2129;border-top:1px solid #262930"></div>
<div class="bx" style="left:0;top:820px;width:61px;height:20px;background:#6c6fe0"></div>
<div class="a" style="left:10px;top:822px;color:#fff">›‹ OVM</div>
<svg class="i" style="left:70px;top:823px;stroke:#ccc" width="12" height="14" viewBox="0 0 12 14"><circle cx="3" cy="2" r="1.5"/><circle cx="3" cy="12" r="1.5"/><circle cx="9" cy="4" r="1.5"/><path d="M3 3.5v7M9 5.5c0 3-6 2-6 5"/></svg>
<div class="a" style="left:86px;top:822px;color:#ccc">main*</div>
<svg class="i" style="left:122px;top:824px;stroke:#ccc" width="15" height="12" viewBox="0 0 15 12"><path d="M4 9H3a2.5 2.5 0 0 1 0-5 4 4 0 0 1 8 0 2.5 2.5 0 0 1 1 5h-1M7.5 5v6M5.5 7l2-2 2 2"/></svg>
<div class="a" style="left:151px;top:822px;color:#ccc">ⓧ 0 <span>⚠</span> 0</div>
<svg class="i" style="left:216px;top:824px;stroke:#ccc" width="13" height="13" viewBox="0 0 13 13"><path d="M6.5 6l-3 7M6.5 6l3 7M4.5 10h4M3 3a5 5 0 0 0 0 6M10 3a5 5 0 0 1 0 6"/><circle cx="6.5" cy="5" r="1"/></svg>
<div class="a" style="left:234px;top:822px;color:#ccc">1</div>
<svg class="i" style="left:1512px;top:823px;stroke:#ccc" width="14" height="15" viewBox="0 0 14 15"><path d="M3 6V1l3 3h2l3-3v5M2 6h10v4a5 5 0 0 1-10 0zM4 8h6"/></svg>
<svg class="i" style="left:1541px;top:823px;stroke:#ccc" width="13" height="14" viewBox="0 0 13 14"><path d="M2 10V6a4.5 4.5 0 0 1 7-3.5M1 10.5h11M5 12.5a1.5 1.5 0 0 0 3 0M11 6v4"/><circle cx="10.5" cy="2.5" r="1.8" fill="#ccc"/></svg>
</div></body></html>
